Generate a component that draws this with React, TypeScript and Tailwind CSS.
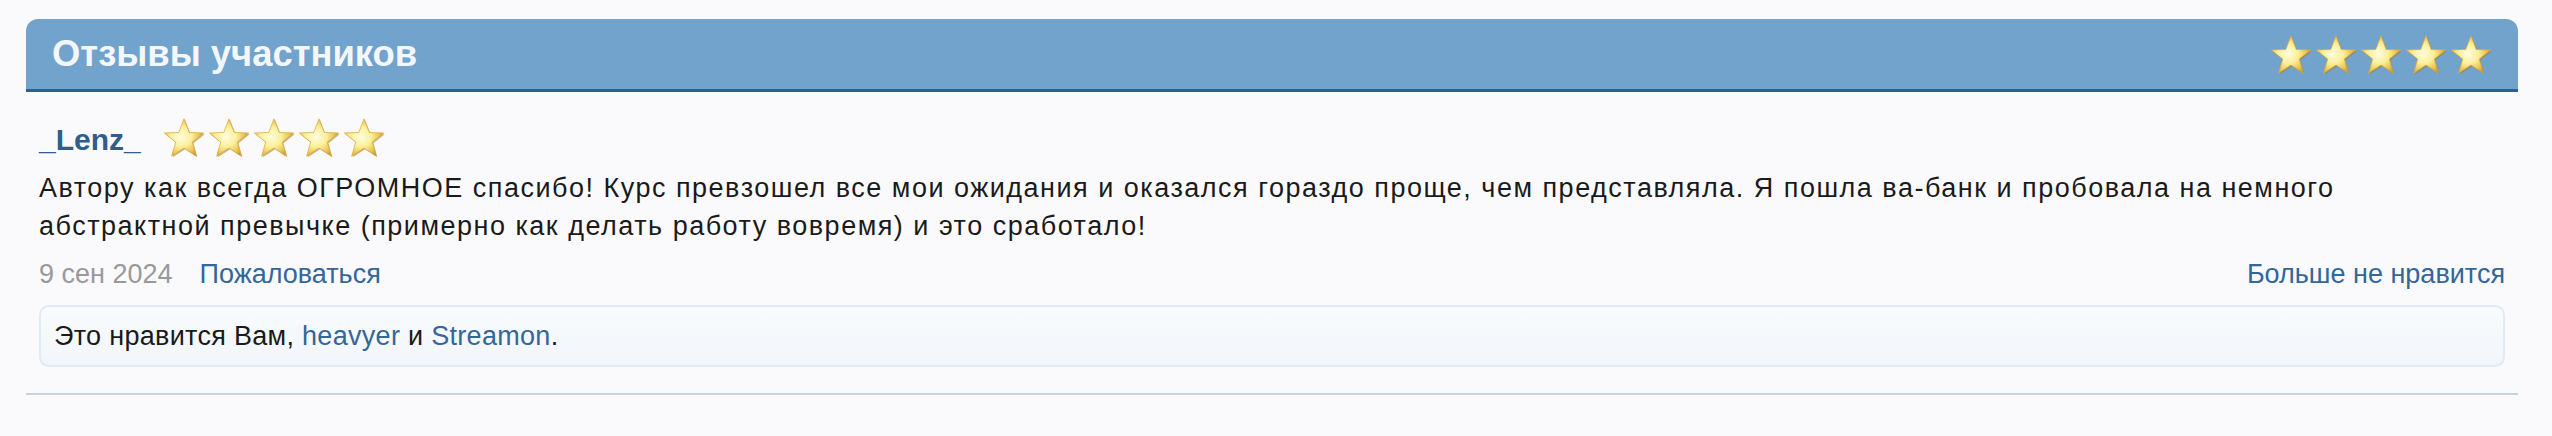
import { useId } from 'react'

function Star() {
  const id = useId().replace(/:/g, '')
  return (
    <svg viewBox="0 0 48 46" className="w-[46px] h-[43px] -mx-[0.5px] shrink-0">
      <defs>
        <radialGradient id={`g${id}`} cx="42%" cy="48%" r="60%">
          <stop offset="0%" stopColor="#fffde0" />
          <stop offset="45%" stopColor="#fbef9a" />
          <stop offset="80%" stopColor="#e8c050" />
          <stop offset="100%" stopColor="#c49325" />
        </radialGradient>
        <filter id={`f${id}`} x="-20%" y="-20%" width="140%" height="140%">
          <feGaussianBlur stdDeviation="0.6" />
        </filter>
      </defs>
      <path
        d="M24 3 L29.6 17.6 L45 18.2 L32.9 27.9 L37.2 43 L24 34.3 L10.8 43 L15.1 27.9 L3 18.2 L18.4 17.6 Z"
        fill="#a97a1c"
        opacity="0.55"
        filter={`url(#f${id})`}
        transform="translate(1.2 1.2)"
      />
      <path
        d="M24 3 L29.6 17.6 L45 18.2 L32.9 27.9 L37.2 43 L24 34.3 L10.8 43 L15.1 27.9 L3 18.2 L18.4 17.6 Z"
        fill={`url(#g${id})`}
        stroke="#d9aa3a"
        strokeWidth="0.8"
        strokeLinejoin="round"
      />
    </svg>
  )
}

function Stars() {
  return (
    <div className="flex items-center">
      {[0, 1, 2, 3, 4].map(i => (
        <Star key={i} />
      ))}
    </div>
  )
}

export default function App() {
  return (
    <div className="min-h-[436px] bg-[#fafafd] pt-[19px] font-['Liberation_Sans',Arial,Helvetica,sans-serif]">
      <div className="ml-[26px] w-[2492px]">
        {/* Header */}
        <div className="flex items-center justify-between h-[73px] pl-[26px] pr-[25px] bg-[#72a3cd] border-b-[3px] border-[#2e5f90] rounded-t-[12px]">
          <h2 className="text-[36.4px] leading-[40px] font-bold text-[#f3f7fb]">Отзывы участников</h2>
          <Stars />
        </div>

        {/* Review */}
        <div className="px-[13px]">
          <div className="flex items-end mt-[24px] gap-[21px]">
            <a className="mb-[4px] text-[30px] leading-[30px] font-bold text-[#2d5e8e]">_Lenz_</a>
            <Stars />
          </div>

          <p className="mt-[10px] text-[27px] leading-[38px] tracking-[1.5px] text-[#1a1a1a]">
            Автору как всегда ОГРОМНОЕ спасибо! Курс превзошел все мои ожидания и оказался гораздо проще, чем представляла. Я пошла ва-банк и пробовала на немного абстрактной превычке (примерно как делать работу вовремя) и это сработало!
          </p>

          <div className="flex items-center justify-between mt-[10px] text-[27px] leading-[38px]">
            <div className="flex gap-[27px]">
              <span className="text-[#999999]">9 сен 2024</span>
              <a className="text-[#336699]">Пожаловаться</a>
            </div>
            <a className="text-[#336699]">Больше не нравится</a>
          </div>

          <div className="mt-[12px] rounded-[10px] border-2 border-[#deebf8] bg-gradient-to-b from-[#f9fbfd] to-[#f2f6fa] px-[13px] py-[10px] text-[27px] leading-[38px] tracking-[0.3px] text-[#1a1a1a]">
            Это нравится Вам, <a className="text-[#336699]">heavyer</a> и <a className="text-[#336699]">Streamon</a>.
          </div>
        </div>

        <div className="mt-[26px] h-[2px] bg-[#c6d3e0]" />
      </div>
    </div>
  )
}
